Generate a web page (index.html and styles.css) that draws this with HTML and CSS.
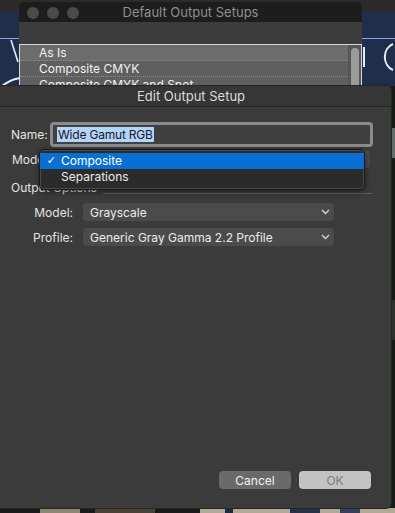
FILE: index.html
```html
<!DOCTYPE html>
<html>
<head>
<meta charset="utf-8">
<link rel="stylesheet" href="styles.css">
</head>
<body>
<div class="desktop">
  <svg class="wallpaper" width="395" height="513" viewBox="0 0 395 513">
    <rect x="0" y="0" width="395" height="12" fill="#2b2b2b"/>
    <rect x="0" y="12" width="395" height="501" fill="#1f2e4b"/>
    <line x1="0" y1="38.5" x2="395" y2="38.5" stroke="#8aa8e2" stroke-width="1"/>
    <path d="M11 40 L18 62" stroke="#e8ecf4" stroke-width="1.6" fill="none"/>
    <path d="M0 88 Q8 80 20 78" stroke="#e8ecf4" stroke-width="2" fill="none"/>
    <rect x="363" y="47" width="2" height="20" fill="#e8ecf4"/>
    <path d="M395 44 A13 14 0 0 0 395 70" stroke="#e8ecf4" stroke-width="2" fill="none" transform="translate(-2,0)"/>
    <rect x="391" y="86" width="4" height="427" fill="#171b15"/>
    <rect x="391" y="128" width="4" height="30" fill="#5d7168"/>
    <rect x="391" y="300" width="4" height="40" fill="#2a3326"/>
    <rect x="0" y="507" width="395" height="6" fill="#1a1a1a"/>
    <rect x="40" y="508" width="40" height="5" fill="#8f8674"/>
    <rect x="95" y="508" width="60" height="5" fill="#4a4236"/>
    <rect x="200" y="508" width="195" height="5" fill="#b2aa96"/>
    <rect x="225" y="508" width="8" height="5" fill="#1d2a44"/>
    <rect x="290" y="508" width="30" height="5" fill="#27324a"/>
    <rect x="340" y="508" width="20" height="5" fill="#34405a"/>
  </svg>

  <section class="win back">
    <header class="back-title">
      <div class="lights"><span></span><span></span><span></span></div>
      <span class="back-title-text">Default Output Setups</span>
    </header>
    <div class="back-body">
      <div class="list">
        <div class="list-rows">
          <div class="row sel">As Is</div>
          <div class="row">Composite CMYK</div>
          <div class="row">Composite CMYK and Spot</div>
        </div>
        <div class="scroll"><div class="thumb"></div></div>
      </div>
    </div>
  </section>

  <section class="win front">
    <header class="front-title">Edit Output Setup</header>
    <div class="front-body">
      <div class="name-row">
        <label class="lbl name-lbl">Name:</label>
        <div class="field"><span class="selected-text">Wide Gamut RGB</span></div>
      </div>
      <div class="mode-row">
        <label class="lbl">Mode:</label>
        <div class="mode-popup">
          <svg class="chev" width="9" height="6" viewBox="0 0 9 6"><polyline points="1,1 4.5,4.5 8,1" fill="none" stroke="#cfcfcf" stroke-width="1.3"/></svg>
        </div>
      </div>
      <div class="group-head">
        <span class="group-label">Output Options</span>
        <span class="group-line"></span>
      </div>
      <div class="opts">
        <label class="olbl">Model:</label>
        <div class="popup"><span>Grayscale</span>
          <svg class="chev" width="9" height="6" viewBox="0 0 9 6"><polyline points="1,1 4.5,4.5 8,1" fill="none" stroke="#d8d8d8" stroke-width="1.3"/></svg>
        </div>
        <label class="olbl">Profile:</label>
        <div class="popup"><span>Generic Gray Gamma 2.2 Profile</span>
          <svg class="chev" width="9" height="6" viewBox="0 0 9 6"><polyline points="1,1 4.5,4.5 8,1" fill="none" stroke="#d8d8d8" stroke-width="1.3"/></svg>
        </div>
      </div>
      <div class="buttons">
        <button class="btn cancel">Cancel</button>
        <button class="btn ok">OK</button>
      </div>
    </div>
  </section>

  <div class="menu">
    <div class="menu-item active"><span class="check">✓</span>Composite</div>
    <div class="menu-item"><span class="check"></span>Separations</div>
  </div>
</div>
</body>
</html>
```

FILE: styles.css
```css
* { box-sizing: border-box; }
html, body { margin: 0; padding: 0; }
body {
  width: 395px;
  height: 513px;
  overflow: hidden;
  background: #1f2e4b;
  font-family: "Inter", "Roboto", "Liberation Sans", sans-serif;
  font-size: 12px;
  color: #e6e6e6;
}
.desktop { position: relative; width: 395px; height: 513px; }
.wallpaper { position: absolute; left: 0; top: 0; display: block; }

.win { position: absolute; }

/* back window */
.back {
  left: 19px; top: 2px; width: 343px; height: 100px;
  background: #3c3c3c;
  border-radius: 5px 5px 0 0;
  overflow: hidden;
}
.back-title {
  height: 20px;
  background: #1d1d1d;
  display: flex;
  align-items: center;
  justify-content: center;
  position: relative;
}
.lights { position: absolute; left: 8px; top: 5px; display: flex; gap: 8px; }
.lights span { width: 12px; height: 12px; border-radius: 50%; background: #4a4a4a; display: block; }
.back-title-text { color: #8e8e8e; font-size: 13px; }
.back-body { padding-top: 22px; }
.list {
  display: flex;
  border: 1px solid #d6d6d6;
  border-bottom: none;
  background: #5f5f5f;
  height: 60px;
}
.list-rows { flex: 1; }
.row {
  height: 16px;
  line-height: 15px;
  padding-left: 19px;
  color: #f2f2f2;
  border-bottom: 1px dotted #8a8a8a;
}
.row.sel { background: #6c6c6c; }
.scroll { width: 13px; background: #565656; padding: 3px 2px; }
.thumb { width: 8px; height: 60px; background: #9b9b9b; border-radius: 4px; margin-left: 1px; }

/* front window */
.front {
  left: -9px; top: 86px; width: 400px; height: 422px;
  background: #3b3b3b;
  border-radius: 5px;
  display: flex;
  flex-direction: column;
  box-shadow: 0 0 0 1px #262626;
}
.front-title {
  height: 21px;
  background: #363636;
  border-bottom: 1px solid #232323;
  border-radius: 5px 5px 0 0;
  text-align: center;
  line-height: 20px;
  font-size: 13px;
  color: #dcdcdc;
}
.front-body {
  flex: 1;
  display: flex;
  flex-direction: column;
  padding: 15px 18px 19px 20px;
}
.lbl { color: #e4e4e4; }
.name-row { display: flex; align-items: center; gap: 6px; height: 25px; }
.name-lbl { width: 33px; white-space: nowrap; }
.field {
  flex: 1;
  height: 25px;
  border: 3px solid #8b8b8b;
  border-radius: 4px;
  background: #404040;
  padding-left: 4px;
  display: flex;
  align-items: center;
}
.selected-text { background: #b3d4fc; color: #1a1a1a; padding: 0 1px; line-height: 15px; letter-spacing: -0.2px; }
.mode-row { display: flex; align-items: center; gap: 6px; height: 18px; margin-top: 3px; padding-left: 1px; }
.mode-popup {
  flex: 1;
  height: 18px;
  margin-right: 3px;
  background: #4a4a4a;
  border-radius: 4px;
  display: flex;
  align-items: center;
  justify-content: flex-end;
  padding-right: 4px;
}
.group-head { display: flex; align-items: center; margin-top: 12px; height: 14px; }
.group-label { color: #e4e4e4; margin-right: 6px; }
.group-line { flex: 1; height: 1px; background: #5e5e5e; margin-top: 12px; margin-right: 1px; }
.opts {
  display: grid;
  grid-template-columns: 62px 251px;
  column-gap: 10px;
  row-gap: 7px;
  margin-top: 9px;
  align-items: center;
}
.olbl { text-align: right; color: #e4e4e4; }
.popup {
  height: 18px;
  background: #4b4b4b;
  border-radius: 4px;
  display: flex;
  align-items: center;
  justify-content: space-between;
  padding: 0 4px 0 7px;
  color: #ececec;
}
.buttons { margin-top: auto; display: flex; justify-content: flex-end; gap: 8px; padding-right: 2px; }
.btn {
  width: 72px; height: 18px;
  border: none;
  border-radius: 4px;
  font-family: inherit;
  font-size: 12px;
  padding: 0;
}
.cancel { background: #6a6a6a; color: #f2f2f2; }
.ok { background: #c2c2c2; color: #7e7e7e; }

/* popup menu overlay */
.menu {
  position: absolute;
  left: 39px; top: 149px; width: 326px; height: 41px;
  background: #2b2b2b;
  border: 1px solid #1a1a1a;
  border-radius: 5px;
  padding-top: 3px;
  box-shadow: 0 2px 6px rgba(0,0,0,0.45), inset 0 0 0 1px #4a4a4a;
}
.menu-item { height: 16px; line-height: 16px; display: flex; color: #ededed; font-size: 12px; }
.menu-item.active { background: #0a6fd2; color: #ffffff; }
.check { width: 21px; text-align: right; padding-right: 5px; font-family: "DejaVu Sans", sans-serif; font-size: 11px; }
```
